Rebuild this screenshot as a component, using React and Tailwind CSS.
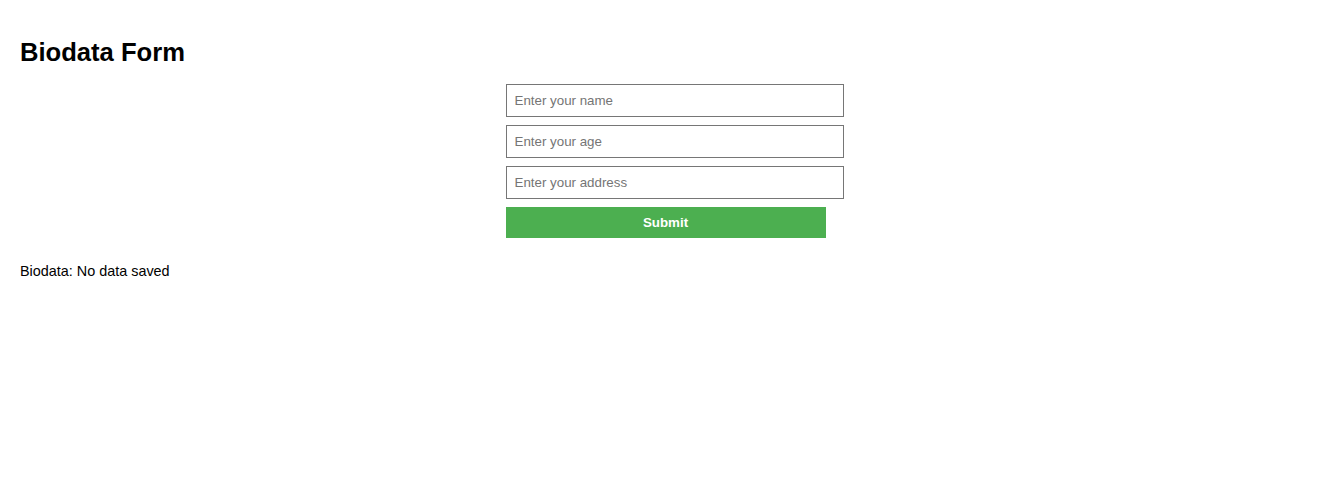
import React, { useState } from 'react';

export default function App() {
  const [name, setName] = useState('');
  const [age, setAge] = useState('');
  const [address, setAddress] = useState('');
  const [saved, setSaved] = useState(null);

  const inputCls =
    'box-border block h-[33px] w-[338px] border border-[#767676] bg-white px-2 text-[13.33px] leading-[15px] text-black outline-none placeholder:text-[#757575]';

  return (
    <div className="min-h-screen bg-white px-5 pt-[38px] font-['Liberation_Sans',Arial,sans-serif] text-black">
      <h2 className="text-[25.6px] font-bold leading-[29px]">Biodata Form</h2>

      <form
        className="mx-auto mt-[17px] flex w-[320px] flex-col gap-2"
        onSubmit={(e) => {
          e.preventDefault();
          setSaved({ name, age, address });
        }}
      >
        <input className={inputCls} placeholder="Enter your name" value={name} onChange={(e) => setName(e.target.value)} />
        <input className={inputCls} placeholder="Enter your age" value={age} onChange={(e) => setAge(e.target.value)} />
        <input className={inputCls} placeholder="Enter your address" value={address} onChange={(e) => setAddress(e.target.value)} />
        <button
          type="submit"
          className="h-[31px] w-[320px] bg-[#4caf50] text-[13.33px] font-bold text-white"
        >
          Submit
        </button>
      </form>

      <p className="mt-[25px] text-[14.4px] leading-[17px]">
        Biodata: {saved ? `${saved.name}, ${saved.age}, ${saved.address}` : 'No data saved'}
      </p>
    </div>
  );
}
